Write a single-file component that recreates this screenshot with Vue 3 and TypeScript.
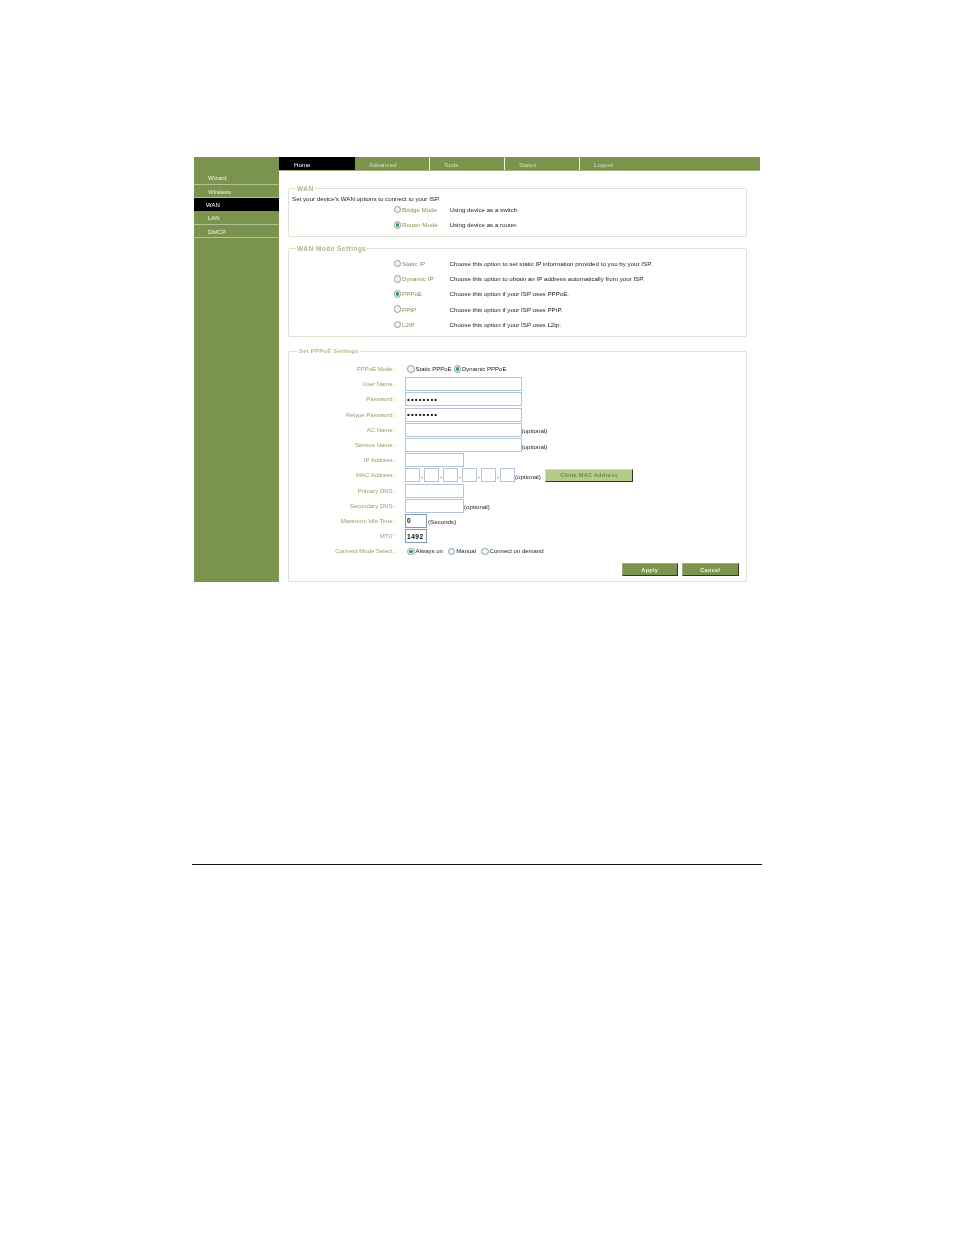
<script setup lang="ts">
const sideItems = ['Wizard', 'Wireless', 'WAN', 'LAN', 'DMCP']
const navItems = ['Home', 'Advanced', 'Tools', 'Status', 'Logout']
const modes = [
  { label: 'Bridge Mode', desc: 'Using device as a switch.', on: false },
  { label: 'Router Mode', desc: 'Using device as a router.', on: true },
]
const wanModes = [
  { label: 'Static IP', desc: 'Choose this option to set static IP information provided to you by your ISP.', on: false },
  { label: 'Dynamic IP', desc: 'Choose this option to obtain an IP address automatically from your ISP.', on: false },
  { label: 'PPPoE', desc: 'Choose this option if your ISP uses PPPoE.', on: true },
  { label: 'PPtP', desc: 'Choose this option if your ISP uses PPtP.', on: false },
  { label: 'L2tP', desc: 'Choose this option if your ISP uses L2tp.', on: false },
]
const macParts = 6
</script>

<template>
  <div class="page">
    <div class="frame">
      <aside class="side">
        <div
          v-for="item in sideItems"
          :key="item"
          class="side-item"
          :class="{ active: item === 'WAN' }"
        >{{ item }}</div>
      </aside>
      <main class="main">
        <nav class="nav">
          <div
            v-for="item in navItems"
            :key="item"
            class="nav-item"
            :class="{ active: item === 'Home' }"
          >{{ item }}</div>
        </nav>
        <div class="content">
          <fieldset class="box box-wan">
            <legend>WAN</legend>
            <p class="intro">Set your device's WAN options to connect to your ISP.</p>
            <div v-for="m in modes" :key="m.label" class="mode-row">
              <input type="radio" name="mode" :checked="m.on" />
              <span class="green">{{ m.label }}</span>
              <span class="desc">{{ m.desc }}</span>
            </div>
          </fieldset>

          <fieldset class="box box-modes">
            <legend>WAN Mode Settings</legend>
            <div v-for="m in wanModes" :key="m.label" class="mode-row">
              <input type="radio" name="wanmode" :checked="m.on" />
              <span class="green">{{ m.label }}</span>
              <span class="desc">{{ m.desc }}</span>
            </div>
          </fieldset>

          <fieldset class="box box-pppoe">
            <legend class="legend-wide">Set PPPoE Settings</legend>
            <div class="form">
              <label>PPPoE Mode :</label>
              <div class="field">
                <input type="radio" name="pm" /><span>Static PPPoE</span>
                <input type="radio" name="pm" checked /><span>Dynamic PPPoE</span>
              </div>
              <label>User Name :</label>
              <div class="field"><input class="txt w116" type="text" /></div>
              <label>Password :</label>
              <div class="field"><input class="txt w116" type="password" value="12345678" /></div>
              <label>Retype Password :</label>
              <div class="field"><input class="txt w116" type="password" value="12345678" /></div>
              <label>AC Name :</label>
              <div class="field"><input class="txt w116" type="text" /><span class="low">(optional)</span></div>
              <label>Service Name :</label>
              <div class="field"><input class="txt w116" type="text" /><span class="low">(optional)</span></div>
              <label>IP Address :</label>
              <div class="field"><input class="txt w59" type="text" /></div>
              <label>MAC Address :</label>
              <div class="field">
                <template v-for="n in macParts" :key="n">
                  <input class="txt w15" type="text" /><span v-if="n < macParts" class="dash">-</span>
                </template>
                <span class="low">(optional)</span>
                <button class="clone" type="button">Clone MAC Address</button>
              </div>
              <label>Primary DNS :</label>
              <div class="field"><input class="txt w59" type="text" /></div>
              <label>Secondary DNS :</label>
              <div class="field"><input class="txt w59" type="text" /><span class="low">(optional)</span></div>
              <label>Maximum Idle Time :</label>
              <div class="field"><input class="txt w22 dark" type="text" value="0" /><span class="low sec">(Seconds)</span></div>
              <label>MTU :</label>
              <div class="field"><input class="txt w22 dark" type="text" value="1492" /></div>
              <label>Connect Mode Select :</label>
              <div class="field">
                <input type="radio" name="cm" checked /><span class="opt">Always on</span>
                <input type="radio" name="cm" /><span class="opt">Manual</span>
                <input type="radio" name="cm" /><span>Connect on demand</span>
              </div>
            </div>
            <div class="actions">
              <button class="act" type="button">Apply</button>
              <button class="act" type="button">Cancel</button>
            </div>
          </fieldset>
        </div>
      </main>
    </div>
    <div class="rule"></div>
  </div>
</template>

<style>
body { background: #fff; }
</style>

<style scoped>
.page {
  width: 954px;
  height: 1235px;
  padding: 157px 0 0 194px;
  box-sizing: border-box;
  overflow: hidden;
  font-family: "Liberation Sans", Arial, sans-serif;
  font-size: 6.2px;
  color: #222;
  background: #fff;
}
.frame {
  display: flex;
  width: 566px;
  height: 425px;
  filter: blur(0.3px);
}
.side {
  width: 85px;
  flex: none;
  background: #7b944d;
  padding-top: 14.4px;
  box-sizing: border-box;
  font-size: 6px;
}
.side-item {
  height: 12.3px;
  line-height: 14px;
  padding-left: 14px;
  color: #eef2e2;
  border-bottom: 1px solid #b4c392;
}
.side-item.active {
  background: #000;
  color: #fff;
  padding-left: 12px;
  border-bottom-color: #000;
}
.main {
  flex: 1;
  min-width: 0;
}
.nav {
  display: flex;
  height: 14px;
  background: #7b944d;
  border-bottom: 1px solid #a3b57f;
  box-sizing: border-box;
}
.nav-item {
  width: 75px;
  padding-left: 14.5px;
  box-sizing: border-box;
  line-height: 15px;
  color: #d5dfc0;
  border-right: 1px solid #eef2e2;
}
.nav-item:last-child { border-right: 0; }
.nav-item.active {
  background: #000;
  color: #fff;
  border-right-color: #000;
  width: 75.5px;
  padding-left: 15px;
}
.content {
  padding: 13px 13px 0 9px;
}
.box {
  margin: 0;
  padding: 0;
  border: 1px solid #dfe2d3;
  border-radius: 2px;
  min-width: 0;
  box-sizing: border-box;
}
.box legend {
  margin-left: 7px;
  padding: 0 1px;
  height: 8px;
  line-height: 9.5px;
  color: #a9bb8d;
  font-size: 6.6px;
  font-weight: bold;
  letter-spacing: 0.42px;
}
.box .legend-wide {
  margin-left: 9px;
  font-size: 5.8px;
  letter-spacing: 0.3px;
}
.box-wan { height: 53px; }
.box-modes { margin-top: 7px; height: 93px; }
.box-pppoe { margin-top: 10px; height: 235px; }
.intro {
  margin: 3px 0 0 3px;
  height: 7px;
  line-height: 7px;
}
.mode-row {
  display: flex;
  align-items: center;
  height: 15.2px;
  padding-left: 104.5px;
}
.box-modes .mode-row:first-of-type { margin-top: 4px; }
.green { width: 47.5px; color: #7b944d; }
.desc { color: #222; }
input[type="radio"] {
  appearance: none;
  width: 7.5px;
  height: 7.5px;
  margin: 0 1px 0 0;
  flex: none;
  box-sizing: border-box;
  border: 1px solid #7f9db9;
  border-radius: 50%;
  background: #f4f4ee;
}
input[type="radio"]:checked {
  background: radial-gradient(circle, #3f9a3f 0 1.6px, #f4f4ee 2px);
}
.form {
  display: grid;
  grid-template-columns: 107px 1fr;
  column-gap: 9px;
  grid-auto-rows: 15.2px;
  margin-top: 6.5px;
  align-items: center;
}
.form label {
  text-align: right;
  color: #8ea36b;
  font-size: 6px;
}
.field {
  display: flex;
  align-items: center;
  height: 15.2px;
  font-size: 6px;
}
.field > input[type="radio"] { margin-left: 2px; }
.opt { margin-right: 3px; }
.txt {
  box-sizing: border-box;
  height: 14px;
  padding: 0 1px;
  margin: 0;
  border: 1px solid #b3c5d6;
  background: #fff;
  font: bold 6.6px "Liberation Sans", Arial, sans-serif;
  letter-spacing: 0.5px;
  color: #111;
  outline: none;
  flex: none;
}
.txt[type="password"] { letter-spacing: 1.1px; font-size: 8px; }
.w116 { width: 116.5px; }
.w59 { width: 59px; }
.w22 { width: 22px; }
.w15 { width: 15px; }
.dark { border-color: #7f9db9; }
.dash { width: 4px; text-align: center; position: relative; top: 2px; }
.low { position: relative; top: 1px; font-size: 6.2px; }
.sec { margin-left: 1px; }
.clone {
  margin-left: 4.5px;
  width: 87.5px;
  height: 12.5px;
  padding: 0;
  border: 1px solid;
  border-color: #cfdfb3 #2e3a1a #2e3a1a #cfdfb3;
  background: #b3cc8c;
  color: #6f8a45;
  font: bold 5.6px "Liberation Sans", Arial, sans-serif;
  letter-spacing: 0.25px;
}
.actions {
  display: flex;
  justify-content: flex-end;
  gap: 4px;
  padding-right: 7.5px;
  margin-top: 4.5px;
}
.act {
  width: 56.5px;
  height: 13px;
  padding: 0;
  border: 1px solid;
  border-color: #9db07a #2e3a1a #2e3a1a #9db07a;
  background: #7b944d;
  color: #eef2e2;
  font: bold 5.6px "Liberation Sans", Arial, sans-serif;
  letter-spacing: 0.25px;
}
.rule {
  margin: 282px 0 0 -2px;
  width: 570px;
  height: 1px;
  background: #111;
}
</style>
